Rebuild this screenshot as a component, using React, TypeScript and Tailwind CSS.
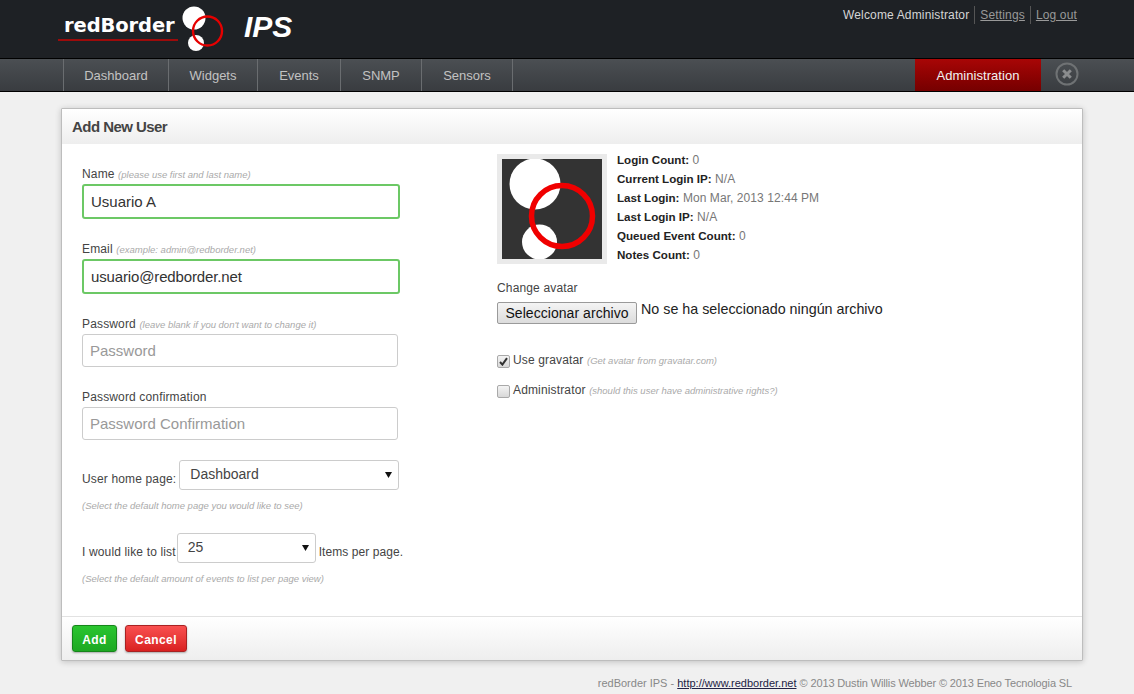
import { ReactNode } from "react";

const NAV_ITEMS = [
  { label: "Dashboard", width: "w-[105px]" },
  { label: "Widgets", width: "w-[89px]" },
  { label: "Events", width: "w-[83px]" },
  { label: "SNMP", width: "w-[81px]" },
  { label: "Sensors", width: "w-[91px]" },
];

const STATS = [
  ["Login Count:", "0"],
  ["Current Login IP:", "N/A"],
  ["Last Login:", "Mon Mar, 2013 12:44 PM"],
  ["Last Login IP:", "N/A"],
  ["Queued Event Count:", "0"],
  ["Notes Count:", "0"],
];

const hintClass = "text-[9.5px] italic text-[#aaaaaa]";
const labelClass = "text-[12px] leading-[14px] tracking-[0.15px] text-[#444444]";
const validInput =
  "block h-[35px] w-[318px] rounded-[3px] border-2 border-[#6cc865] bg-white px-[7px] text-[15px] text-[#333333] outline-none";
const plainInput =
  "block h-[33px] w-[316px] rounded-[3px] border border-[#cccccc] bg-white px-[7px] text-[15px] text-[#333333] outline-none placeholder:text-[#999999]";

function LogoMark() {
  return (
    <svg width="50" height="54" viewBox="0 0 50 54" className="shrink-0">
      <circle cx="12" cy="13" r="11.5" fill="#ffffff" />
      <circle cx="14" cy="38" r="8" fill="#ffffff" />
      <circle cx="25.5" cy="26" r="14.5" fill="none" stroke="#e60000" strokeWidth="2.4" />
    </svg>
  );
}

function SelectBox({ width, value }: { width: string; value: string }) {
  return (
    <div className={`relative ${width}`}>
      <select
        defaultValue={value}
        className="block h-[30px] w-full appearance-none rounded-[3px] border border-[#cccccc] bg-white pb-[2px] pl-[10px] text-[14px] text-[#444444] outline-none"
      >
        <option>{value}</option>
      </select>
      <svg width="7" height="6" viewBox="0 0 7 6" className="absolute right-[7px] top-[12px]">
        <path d="M0 0h7L3.5 6z" fill="#111111" />
      </svg>
    </div>
  );
}

function CheckRow({ checked, label, hint }: { checked?: boolean; label: string; hint: string }) {
  return (
    <div className="flex h-[14px] items-center">
      <span className="mr-[3px] mt-[2px] flex h-[13px] w-[13px] items-center justify-center rounded-[2px] border border-[#a9a9a9] bg-gradient-to-b from-[#f4f4f4] to-[#d8d8d8]">
        {checked && (
          <svg width="9" height="9" viewBox="0 0 9 9">
            <path d="M1 5l2.4 2.6L8 1.2" fill="none" stroke="#333333" strokeWidth="2" />
          </svg>
        )}
      </span>
      <div className={labelClass}>
        {label} <span className={`${hintClass} tracking-normal`}>{hint}</span>
      </div>
    </div>
  );
}

function Field({ label, hint, children }: { label: string; hint?: string; children: ReactNode }) {
  return (
    <div>
      <div className={`${labelClass} mb-[3px] h-[14px]`}>
        {label} {hint && <span className={`${hintClass} tracking-normal`}>{hint}</span>}
      </div>
      {children}
    </div>
  );
}

export default function App() {
  return (
    <div className="h-[694px] w-[1134px] overflow-hidden bg-[#f0f0f0] font-['Liberation_Sans',Arial,sans-serif]">
      <header className="flex h-[58px] justify-between bg-[#1e2125] pl-[58px] pr-[57px]">
        <div className="flex items-start">
          <div className="mt-[15px] w-[120px] border-b-2 border-[#9c0b0b] pb-[3px] pl-[6px] font-['DejaVu_Sans',sans-serif] text-[19.5px] font-bold leading-[21px] tracking-[-0.1px] text-white">
            redBorder
          </div>
          <div className="mt-[5px] ml-[4px]">
            <LogoMark />
          </div>
          <div className="ml-[12px] mt-[9px] text-[30px] font-bold italic leading-[36px] text-white">IPS</div>
        </div>
        <div className="mt-[8px] flex h-[14px] items-center text-[12px] tracking-[0.15px] text-[#d5d5d5]">
          <span>Welcome Administrator</span>
          <span className="ml-[5px] border-l border-[#555555] pl-[5px] text-[#999999] underline">Settings</span>
          <span className="ml-[5px] border-l border-[#555555] pl-[5px] text-[#999999] underline">Log out</span>
        </div>
      </header>

      <nav className="flex h-[34px] items-stretch justify-between border-y border-black bg-gradient-to-b from-[#4b4f53] to-[#393c40] pl-[63px] pr-[55px]">
        <div className="flex border-l border-[#6a6d70]">
          {NAV_ITEMS.map((item) => (
            <div
              key={item.label}
              className={`flex items-center justify-center border-r border-[#6a6d70] pt-[2px] text-[13px] text-[#c2c2c2] ${item.width}`}
            >
              {item.label}
            </div>
          ))}
        </div>
        <div className="flex items-center">
          <div className="flex h-full w-[126px] items-center justify-center bg-gradient-to-b from-[#a80606] to-[#760000] pt-[2px] text-[13px] tracking-[0.05px] text-[#f2f2f2]">
            Administration
          </div>
          <svg width="24" height="24" viewBox="0 0 24 24" className="ml-[14px] mb-[3px]">
            <circle cx="12" cy="12" r="10.5" fill="none" stroke="#6f7274" strokeWidth="2" />
            <path d="M8.2 8.2l7.6 7.6M15.8 8.2l-7.6 7.6" stroke="#8a8c8e" strokeWidth="3" />
          </svg>
        </div>
      </nav>

      <main className="ml-[61px] mt-[16px] h-[553px] w-[1022px] rounded-[1px] border border-[#bdbdbd] bg-white shadow-[0_1px_6px_rgba(0,0,0,0.2)]">
        <div className="flex h-[35px] items-center bg-gradient-to-b from-white to-[#eeeeee] pl-[10px] pt-[2px] text-[15px] font-bold tracking-[-0.55px] text-[#444444]">
          Add New User
        </div>

        <div className="flex h-[473px] border-b border-[#e2e2e2]">
          <div className="ml-[20px] flex w-[415px] flex-col pt-[23px]">
            <Field label="Name" hint="(please use first and last name)">
              <input defaultValue="Usuario A" className={validInput} />
            </Field>
            <div className="mt-[23px]">
              <Field label="Email" hint="(example: admin@redborder.net)">
                <input defaultValue="usuario@redborder.net" className={`${validInput} tracking-[-0.14px]`} />
              </Field>
            </div>
            <div className="mt-[23px]">
              <Field label="Password" hint="(leave blank if you don't want to change it)">
                <input placeholder="Password" className={plainInput} />
              </Field>
            </div>
            <div className="mt-[23px]">
              <Field label="Password confirmation">
                <input placeholder="Password Confirmation" className={plainInput} />
              </Field>
            </div>
            <div className="mt-[20px] flex items-end">
              <span className={`${labelClass} mb-[4px] mr-[3px]`}>User home page:</span>
              <SelectBox width="w-[220px]" value="Dashboard" />
            </div>
            <div className={`${hintClass} mt-[10px] leading-[12px]`}>
              (Select the default home page you would like to see)
            </div>
            <div className="mt-[21px] flex items-end">
              <span className={`${labelClass} mb-[4px] mr-[1px]`}>I would like to list</span>
              <SelectBox width="w-[139px]" value="25" />
              <span className="mb-[4px] ml-[3px] text-[12px] leading-[14px] tracking-[0.08px] text-[#444444]">
                Items per page.
              </span>
            </div>
            <div className={`${hintClass} mt-[10px] leading-[12px]`}>
              (Select the default amount of events to list per page view)
            </div>
          </div>

          <div className="flex flex-1 flex-col pt-[10px]">
            <div className="flex">
              <div className="h-[110px] w-[110px] bg-[#eaeaea] p-[5px]">
                <svg width="100" height="100" viewBox="0 0 100 100" className="block bg-[#333333]">
                  <circle cx="33" cy="25" r="25.5" fill="#ffffff" />
                  <circle cx="37.5" cy="83" r="17.5" fill="#ffffff" />
                  <circle cx="60" cy="57" r="30.5" fill="none" stroke="#f00000" strokeWidth="5.5" />
                </svg>
              </div>
              <div className="ml-[10px] -mt-[4px]">
                {STATS.map(([key, value]) => (
                  <div key={key} className="h-[19px] text-[12px] leading-[19px] tracking-[0.07px] text-[#777777]">
                    <strong className="text-[11.6px] font-bold tracking-normal text-[#222222]">{key}</strong> {value}
                  </div>
                ))}
              </div>
            </div>
            <div className={`${labelClass} mt-[17px]`}>Change avatar</div>
            <div className="mt-[7px] flex items-start">
              <button className="h-[22px] w-[140px] rounded-[2px] border border-[#9a9a9a] bg-gradient-to-b from-[#f4f4f4] to-[#dcdcdc] text-[14px] leading-[20px] tracking-[0.05px] text-[#111111]">
                Seleccionar archivo
              </button>
              <span className="ml-[4px] -mt-[1px] text-[14.3px] leading-[16px] text-[#222222]">
                No se ha seleccionado ningún archivo
              </span>
            </div>
            <div className="mt-[29px]">
              <CheckRow checked label="Use gravatar" hint="(Get avatar from gravatar.com)" />
            </div>
            <div className="mt-[16px]">
              <CheckRow label="Administrator" hint="(should this user have administrative rights?)" />
            </div>
          </div>
        </div>

        <div className="flex h-[43px] items-center gap-[8px] bg-gradient-to-b from-white to-[#eeeeee] pl-[10px]">
          <button className="h-[27px] w-[45px] rounded-[3px] border border-[#15851a] bg-gradient-to-b from-[#2ac52f] to-[#1da822] pt-[2px] text-[12px] font-bold tracking-[0.4px] text-white shadow-[0_1px_2px_rgba(0,0,0,0.3)]">
            Add
          </button>
          <button className="h-[27px] w-[62px] rounded-[3px] border border-[#a82222] bg-gradient-to-b from-[#f94f4f] to-[#d92020] pt-[2px] text-[12px] font-bold tracking-[0.4px] text-white shadow-[0_1px_2px_rgba(0,0,0,0.3)]">
            Cancel
          </button>
        </div>
      </main>

      <footer className="mr-[62px] mt-[15px] text-right text-[11px] leading-[14px] text-[#888888]">
        redBorder IPS - <span className="text-[#222244] underline">http://www.redborder.net</span>{" "}
        <span className="tracking-[-0.13px]">© 2013 Dustin Willis Webber © 2013 Eneo Tecnologia SL</span>
      </footer>
    </div>
  );
}
